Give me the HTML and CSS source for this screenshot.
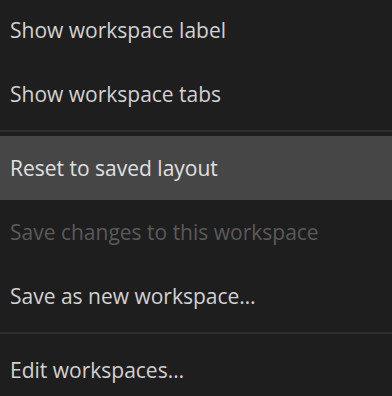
FILE: index.html
```html
<!DOCTYPE html>
<html lang="en">
<head>
  <meta charset="UTF-8" />
  <title>Workspace menu</title>
  <link rel="stylesheet" href="styles.css">
</head>
<body>
  <ul class="menu">
    <li class="menu-item">Show workspace label</li>
    <li class="menu-item">Show workspace tabs</li>
    <li class="separator"></li>
    <li class="menu-item active">Reset to saved layout</li>
    <li class="menu-item disabled">Save changes to this workspace</li>
    <li class="menu-item">Save as new workspace…</li>
    <li class="separator"></li>
    <li class="menu-item">Edit workspaces…</li>
  </ul>
</body>
</html>
```

FILE: styles.css
```css
* {
  margin: 0;
  padding: 0;
  box-sizing: border-box;
}

body {
  background: #1e1e1e;
  font-family: 'Open Sans', sans-serif;
  color: #d2d2d2;
  overflow: hidden;
}

.menu {
  list-style: none;
  margin-top: -2px;
}

.menu-item {
  height: 64px;
  display: flex;
  align-items: center;
  padding-left: 10px;
  font-size: 21px;
  white-space: nowrap;
}

.menu-item.active {
  background: #464646;
  color: #e0e0e0;
}

.menu-item.disabled {
  color: #5a5a5a;
}

.separator {
  height: 2px;
  margin: 4px 0;
  background: #2f2f2f;
}
```
